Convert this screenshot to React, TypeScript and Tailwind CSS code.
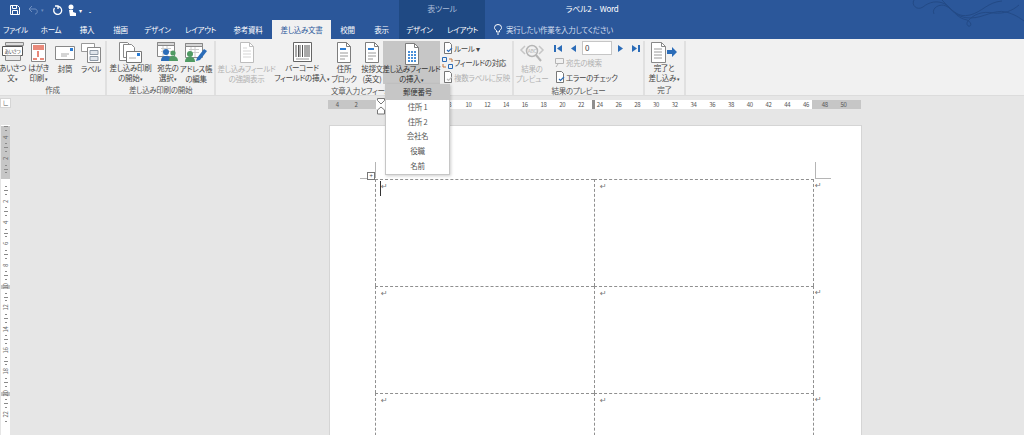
import React from "react";

const font = { fontFamily: '"Noto Sans CJK JP", "Liberation Sans", sans-serif' };

const tabs = [
  { label: "ファイル", w: "w-[31px]" },
  { label: "ホーム", w: "w-[40px]" },
  { label: "挿入", w: "w-[32px]" },
  { label: "描画", w: "w-[35px]" },
  { label: "デザイン", w: "w-[39px]" },
  { label: "レイアウト", w: "w-[47px]" },
  { label: "参考資料", w: "w-[48px]" },
];

function Doc({ lines = "#9aa7b5", stroke = "#8a8a8a" }: { lines?: string; stroke?: string }) {
  return (
    <svg width="18" height="21" viewBox="0 0 18 21" fill="none">
      <path d="M2.5.5h9l4 4v16h-13z" fill="#fff" stroke={stroke} />
      <path d="M11.5.5v4h4" stroke={stroke} />
      <path d="M5 6h4M5 9h8M5 12h8M5 15h8" stroke={lines} />
    </svg>
  );
}

function Address() {
  return (
    <svg width="18" height="21" viewBox="0 0 18 21" fill="none">
      <path d="M2.5.5h9l4 4v16h-13z" fill="#fff" stroke="#7d7d7d" />
      <path d="M11.5.5v4h4" stroke="#7d7d7d" />
      <path d="M5 7h6" stroke="#2b7cd3" strokeWidth="2" />
      <path d="M5 11h8M5 14h8M5 17h5" stroke="#9a9a9a" />
    </svg>
  );
}

function MergeField() {
  return (
    <svg width="18" height="22" viewBox="0 0 18 22" fill="none">
      <path d="M2.5.5h9l4 4v17h-13z" fill="#fff" stroke="#7d7d7d" />
      <path d="M11.5.5v4h4" stroke="#7d7d7d" />
      <path d="M5 8h2v2H5zM8 8h2v2H8zM11 8h2v2h-2zM5 11h2v2H5zM8 11h2v2H8zM11 11h2v2h-2zM5 14h2v2H5zM8 14h2v2H8zM11 14h2v2h-2zM5 17h2v2H5zM8 17h2v2H8zM11 17h2v2h-2z" fill="#4a90d9" />
    </svg>
  );
}

function Greeting() {
  return (
    <svg width="22" height="20" viewBox="0 0 22 20" fill="none">
      <path d="M3.5.5h18v3h-18z" fill="#ddd" stroke="#8a8a8a" />
      <path d="M.5 4.5h20v9H.5z" fill="#fff" stroke="#555" />
      <text x="10.5" y="11" fontSize="4.5" fill="#333" textAnchor="middle" style={font}>あいさつ</text>
      <path d="M3.5 13.500v5h15v-5" fill="#e8e8e8" stroke="#8a8a8a" />
    </svg>
  );
}

function Postcard() {
  return (
    <svg width="15" height="19" viewBox="0 0 15 19" fill="none">
      <path d="M.5.5h14v18H.5z" fill="#fff" stroke="#888" />
      <path d="M2 2h11v5H2z" fill="#e9897a" />
      <path d="M7 8v6" stroke="#e9897a" strokeWidth="2" />
      <path d="M2 16h4M9 16h4" stroke="#e9897a" strokeWidth="2" />
    </svg>
  );
}

function Envelope() {
  return (
    <svg width="20" height="14" viewBox="0 0 20 14" fill="none">
      <path d="M.5.5h19v13H.5z" fill="#fff" stroke="#888" />
      <path d="M15 2h3v3h-3z" fill="#2b7cd3" />
      <path d="M6 8h8M6 10h6" stroke="#aaa" />
    </svg>
  );
}

function Labels() {
  return (
    <svg width="20" height="20" viewBox="0 0 20 20" fill="none">
      <path d="M.5.5h13v8H.5z" fill="#fff" stroke="#999" />
      <path d="M6.500 4.500h13v15h-13z" fill="#fff" stroke="#888" />
      <path d="M9 7.500h8v4H9zM9 13.500h8v4H9z" fill="#dfe5ec" stroke="#8d99a6" />
    </svg>
  );
}

function StartMerge() {
  return (
    <svg width="24" height="21" viewBox="0 0 24 21" fill="none">
      <path d="M.5.5h8l3 3v15H.5z" fill="#fff" stroke="#888" />
      <path d="M4.500 2.500h8l3 3v10h-11z" fill="#fff" stroke="#888" />
      <path d="M7.500 9.500h15v11h-15z" fill="#fff" stroke="#777" />
      <path d="M18 11h3v3h-3z" fill="#2b7cd3" />
      <path d="M10 16h7" stroke="#aaa" />
    </svg>
  );
}

function People({ pen }: { pen?: boolean }) {
  return (
    <svg width="22" height="20" viewBox="0 0 22 20" fill="none">
      <path d="M.5.500h17v14H.5z" fill="#fff" stroke="#888" />
      <path d="M.5.500h17v3H.5z" fill="#d5d5d5" stroke="#888" />
      <path d="M4 6.500h10M4 9.500h10M6 4v10M10 4v10" stroke="#ccc" />
      {pen ? (
        <>
          <circle cx="5" cy="11" r="3" fill="#4f9a63" />
          <path d="M0 19c0-4 2-5 5-5s5 1 5 5z" fill="#4f9a63" />
          <path d="M12 15l7-9 3 2-7 9-4 1z" fill="#2b6cb8" />
        </>
      ) : (
        <>
          <circle cx="9" cy="10" r="3" fill="#2b6cb8" />
          <path d="M4 19c0-4 2-5 5-5s5 1 5 5z" fill="#2b6cb8" />
          <circle cx="16" cy="11" r="2.600" fill="#4f9a63" />
          <path d="M12 19c0-4 2-5 4-5s5 1 5 5z" fill="#4f9a63" />
        </>
      )}
    </svg>
  );
}

function Barcode() {
  return (
    <svg width="19" height="20" viewBox="0 0 19 20" fill="none">
      <path d="M.5.5h18v19H.5z" fill="#fff" stroke="#666" />
      <path d="M3 3v12M5.500 3v12M7 3v12M9.500 3v12M12 3v12M14 3v12M16 3v12" stroke="#555" />
      <path d="M3 17h13" stroke="#999" />
    </svg>
  );
}

function ResultPreview() {
  return (
    <svg width="26" height="20" viewBox="0 0 26 20" fill="none">
      <path d="M6 3L2 7l4 4M20 3l4 4-4 4" stroke="#c6c6c6" strokeWidth="1.500" />
      <circle cx="13" cy="8" r="5.500" stroke="#b5b5b5" strokeWidth="1.500" fill="#f1f1f1" />
      <text x="13" y="10" fontSize="5" fill="#b5b5b5" textAnchor="middle" style={font}>ABC</text>
      <path d="M17 12l5 6" stroke="#b5b5b5" strokeWidth="2" />
    </svg>
  );
}

function Finish() {
  return (
    <svg width="26" height="21" viewBox="0 0 26 21" fill="none">
      <path d="M.5.5h10l4 4v16H.5z" fill="#fff" stroke="#888" />
      <path d="M10.500.5v4h4" stroke="#888" />
      <path d="M3 7h8M3 10h8M3 13h8M3 16h8" stroke="#9a9a9a" />
      <path d="M16 8h5V5l5 5-5 5v-3h-5z" fill="#2b6cb8" />
    </svg>
  );
}

function RibbonButton({
  icon,
  lines,
  w,
  muted,
  caret,
}: {
  icon: React.ReactNode;
  lines: string[];
  w: string;
  muted?: boolean;
  caret?: boolean;
}) {
  return (
    <div className={`${w} h-[43px] flex flex-col items-center shrink-0`}>
      <div className="h-[23px] flex items-center justify-center">{icon}</div>
      <div className={`text-[7.5px] leading-[10px] text-center whitespace-nowrap ${muted ? "text-[#b1b1b1]" : "text-[#444]"}`}>
        {lines.map((l, i) => (
          <div key={i}>
            {l}
            {caret && i === lines.length - 1 ? <span className="text-[5px]"> ▾</span> : null}
          </div>
        ))}
      </div>
    </div>
  );
}

function Group({ w, label, children }: { w: string; label: string; children: React.ReactNode }) {
  return (
    <div className={`${w} shrink-0 h-[54px] flex flex-col border-r-2 border-[#e0e0e0] overflow-visible`}>
      <div className="h-[44px] flex">{children}</div>
      <div className="text-[7.5px] leading-[12px] text-[#555] text-center whitespace-nowrap">{label}</div>
    </div>
  );
}

function SmallRow({ icon, text, muted }: { icon: React.ReactNode; text: string; muted?: boolean }) {
  return (
    <div className={`h-[14.5px] flex items-center gap-[1px] text-[7.5px] whitespace-nowrap ${muted ? "text-[#b1b1b1]" : "text-[#444]"}`}>
      <span className="w-[11px] flex justify-center">{icon}</span>
      {text}
    </div>
  );
}

function MiniDoc({ color = "#2b6cb8" }: { color?: string }) {
  return (
    <svg width="10" height="12" viewBox="0 0 10 12" fill="none">
      <path d="M1.500.500h5l2 2v9h-7z" fill="#fff" stroke="#777" />
      <path d="M4 8l1.500 1.500L9 6" stroke={color} strokeWidth="1.200" />
    </svg>
  );
}

function NavTri({ dir, bar }: { dir: "l" | "r"; bar?: boolean }) {
  return (
    <svg width="9" height="9" viewBox="0 0 9 9" fill="#2b6cb8">
      {dir === "l" ? <path d="M8 1v7L3 4.500z" /> : <path d="M1 1v7l5-3.500z" />}
      {bar ? dir === "l" ? <path d="M0 1h2v7H0z" /> : <path d="M7 1h2v7H7z" /> : null}
    </svg>
  );
}

function RulerH() {
  const left = ["4", "2", "", "2", "4", "6", "8"];
  const rest = ["10", "12", "14", "16", "18", "20", "22", "24", "26", "28", "30", "32", "34", "36", "38", "40", "42", "44", "46", "48", "50"];
  return (
    <div className="w-[533px] h-[9px] flex bg-white relative overflow-visible text-[6px] leading-[9px] text-[#555]">
      <div className="absolute left-0 top-0 h-[9px] w-[48px] bg-[#c6c6c6]" />
      <div className="absolute left-[484px] top-0 h-[9px] w-[49px] bg-[#c6c6c6]" />
      <div className="absolute left-[264px] top-0 h-[9px] w-[3px] bg-[#8f8f8f]" />
      {[...left, ...rest].map((n, i) => (
        <div key={i} className="w-[18.75px] shrink-0 text-center relative">{n}</div>
      ))}
    </div>
  );
}

function RulerV() {
  const nums = ["4", "2", "", "2", "4", "6", "8", "10", "12", "14", "16", "18", "20", "22"];
  return (
    <div className="w-[9px] h-full flex flex-col bg-white shrink-0 pt-[1px]">
      {nums.map((n, i) => (
        <div
          key={i}
          className={`h-[21.33px] shrink-0 relative flex flex-col items-center justify-between ${i < 2 ? "bg-[#c6c6c6]" : i === 2 ? "bg-[linear-gradient(#c6c6c6_50%,#fff_50%)]" : ""}`}
        >
          {n === "10" || n === "20" ? <div className="absolute left-0 right-0 top-[10px] h-[4px] bg-[#c6c6c6]" /> : null}
          <span className="w-[4px] h-px bg-[#8a8a8a]" />
          <span className="w-[2px] h-px bg-[#8a8a8a]" />
          <span className="h-[7px] w-[7px] flex items-center justify-center text-[6px] leading-none text-[#666] -rotate-90 whitespace-nowrap relative">{n}</span>
          <span className="w-[2px] h-px bg-[#8a8a8a]" />
          <span className="h-0" />
        </div>
      ))}
    </div>
  );
}

function Mark() {
  return <span className="text-[#777]" style={{ fontFamily: '"DejaVu Sans", sans-serif' }}>↵</span>;
}

function TableRow({ first }: { first?: boolean }) {
  return (
    <div className="flex h-[107px] shrink-0 text-[8px] leading-[8px]">
      <div className="w-[219px] h-full border-l border-t border-dashed border-[#8f8f8f] pl-[5px] pt-[2px] relative">
        {first ? <span className="absolute left-[4px] top-[1px] w-px h-[15px] bg-[#333]" /> : null}
        <Mark />
      </div>
      <div className="w-[220px] h-full border-l border-r border-t border-dashed border-[#8f8f8f] pl-[5px] pt-[2px]">
        <Mark />
      </div>
      <div className="pl-[1px] pt-[2px]">
        <Mark />
      </div>
    </div>
  );
}

export default function App() {
  return (
    <div className={`w-[1024px] h-[435px] overflow-hidden flex flex-col bg-[#e6e6e6] relative tracking-[-0.3px] [font-feature-settings:"palt"]`} style={font}>
      {/* title bar */}
      <div className="h-[39px] bg-[#2b579a] shrink-0 relative">
        <svg className="absolute right-0 top-0" width="114" height="27" viewBox="0 0 114 27" fill="none" stroke="#234a86" strokeWidth="1">
          <path d="M4 0c-3 5 3 11 9 7 6-5 14-7 22-3 8 5 11 14 22 16 3 1 5 5 3 6-3 1-4-3-2-5 6-7 14-10 26-8 10 1 18-2 25-8" />
          <path d="M24 14c-3-6 6-11 12-8 8 4 11 12 24 9 12-3 18-13 32-14" />
          <path d="M32 0c8 8 14 18 28 18 14 0 24-9 36-6 8 2 14 6 18 9" />
        </svg>
        <div className="h-[20px] flex relative">
          <div className="w-[399px] flex items-center">
            <svg className="ml-[10px]" width="10" height="10" viewBox="0 0 10 10" fill="none" stroke="#fff">
              <path d="M.5.500h7l2 2v7h-9z" />
              <path d="M2.500.500v3h4v-3M2.500 9.500v-4h5v4" />
            </svg>
            <svg className="ml-[8px]" width="12" height="10" viewBox="0 0 12 10" fill="none" stroke="#6f8fc0">
              <path d="M4 1L1 4l3 3M1 4h6c3 0 3 5 0 5" />
            </svg>
            <span className="text-[5px] text-[#6f8fc0] ml-[1px]">▾</span>
            <svg className="ml-[8px]" width="11" height="11" viewBox="0 0 11 11" fill="none" stroke="#fff" strokeWidth="1.300">
              <path d="M6.500 1.500a4 4 0 1 1-4 1.500M6 4V1h-3" />
            </svg>
            <svg className="ml-[5px]" width="8" height="13" viewBox="0 0 8 13" fill="#fff">
              <circle cx="3" cy="3" r="2.500" />
              <path d="M1 6h4v2l3 1v3H2z" />
            </svg>
            <span className="text-[6px] text-white ml-[3px]">▾</span>
            <span className="text-[6px] text-white ml-[8px]">₌</span>
          </div>
          <div className="w-[86px] bg-[#1f4983] text-[8px] leading-[18px] text-[#a9bcd8] text-center">表ツール</div>
          <div className="w-[214px] text-[8px] leading-[18px] text-white text-center whitespace-pre">ラベル2  -  Word</div>
        </div>
        <div className="h-[19px] flex text-[7.5px] leading-[19px] text-white relative">
          {tabs.map((t, i) => (
            <div key={i} className={`${t.w} text-center shrink-0`}>{t.label}</div>
          ))}
          <div className="w-[59px] bg-[#f1f1f1] text-[#2b579a] text-center shrink-0">差し込み文書</div>
          <div className="w-[33px] text-center shrink-0">校閲</div>
          <div className="w-[35px] text-center shrink-0">表示</div>
          <div className="w-[41px] bg-[#1f4983] text-center shrink-0">デザイン</div>
          <div className="w-[45px] bg-[#1f4983] text-center shrink-0">レイアウト</div>
          <div className="ml-[9px] flex items-center gap-[4px] text-[#d3deee]">
            <svg width="8" height="11" viewBox="0 0 8 11" fill="none" stroke="#fff">
              <path d="M2.500 8V6.500C1 5.500.5 4.700.5 3.500a3.500 3 0 0 1 7 0c0 1.200-.5 2-2 3V8zM3 10h2" />
            </svg>
            実行したい作業を入力してください
          </div>
        </div>
      </div>

      {/* ribbon */}
      <div className="h-[57px] shrink-0 bg-[#f1f1f1] border-b border-[#dcdcdc] flex pt-[2px]">
        <Group w="w-[107px]" label="作成">
          <RibbonButton w="w-[25px]" icon={<Greeting />} lines={["あいさつ", "文"]} caret />
          <RibbonButton w="w-[27px]" icon={<Postcard />} lines={["はがき", "印刷"]} caret />
          <RibbonButton w="w-[26px]" icon={<Envelope />} lines={["封筒"]} />
          <RibbonButton w="w-[26px]" icon={<Labels />} lines={["ラベル"]} />
        </Group>
        <Group w="w-[109px]" label="差し込み印刷の開始">
          <RibbonButton w="w-[47px]" icon={<StartMerge />} lines={["差し込み印刷", "の開始"]} caret />
          <RibbonButton w="w-[28px]" icon={<People />} lines={["宛先の", "選択"]} caret />
          <RibbonButton w="w-[28px]" icon={<People pen />} lines={["アドレス帳", "の編集"]} />
        </Group>
        <Group w="w-[298px]" label="文章入力とフィールド">
          <RibbonButton w="w-[61px]" muted icon={<Doc stroke="#bdbdbd" lines="#d5d5d5" />} lines={["差し込みフィールド", "の強調表示"]} />
          <RibbonButton w="w-[50px]" icon={<Barcode />} lines={["バーコード", "フィールドの挿入"]} caret />
          <RibbonButton w="w-[34px]" icon={<Address />} lines={["住所", "ブロック"]} />
          <RibbonButton w="w-[22px]" icon={<Address />} lines={["挨拶文", "(英文)"]} />
          <div className="w-[57px] h-[43px] bg-[#c6c6c6] shrink-0 flex flex-col items-center">
            <div className="h-[23px] pt-[2px] flex items-center"><MergeField /></div>
            <div className="text-[7.5px] leading-[10px] text-[#333] text-center whitespace-nowrap">
              <div>差し込みフィールド</div>
              <div>の挿入<span className="text-[5px]"> ▾</span></div>
            </div>
          </div>
          <div className="pl-[2px] flex flex-col">
            <SmallRow icon={<MiniDoc />} text="ルール ▾" />
            <SmallRow
              icon={
                <svg width="11" height="12" viewBox="0 0 11 12" fill="none">
                  <path d="M.5.500h4v4h-4zM6.500 7.500h4v4h-4z" stroke="#2b6cb8" />
                  <path d="M7 2h3v3M4 10H1V7" stroke="#c0743c" />
                </svg>
              }
              text="フィールドの対応"
            />
            <SmallRow muted icon={<MiniDoc color="#bdbdbd" />} text="複数ラベルに反映" />
          </div>
        </Group>
        <Group w="w-[131px]" label="結果のプレビュー">
          <RibbonButton w="w-[36px]" muted icon={<ResultPreview />} lines={["結果の", "プレビュー"]} />
          <div className="flex flex-col pl-[4px]">
            <div className="h-[14.5px] flex items-center gap-[5px]">
              <NavTri dir="l" bar />
              <NavTri dir="l" />
              <div className="w-[30px] h-[14px] border border-[#c6c6c6] bg-white text-[8px] leading-[12px] text-[#444] pl-[2px]">0</div>
              <NavTri dir="r" />
              <NavTri dir="r" bar />
            </div>
            <SmallRow
              muted
              icon={
                <svg width="11" height="11" viewBox="0 0 11 11" fill="none" stroke="#b5b5b5">
                  <path d="M1.500 1.500h8v5h-8zM4 7l-2 3" />
                </svg>
              }
              text="宛先の検索"
            />
            <SmallRow icon={<MiniDoc />} text="エラーのチェック" />
          </div>
        </Group>
        <Group w="w-[41px]" label="完了">
          <RibbonButton w="w-[38px]" icon={<Finish />} lines={["完了と", "差し込み"]} caret />
        </Group>
      </div>

      {/* document area */}
      <div className="flex-1 min-h-0 flex flex-col overflow-hidden">
        <div className="flex items-end h-[12px] shrink-0">
          <div className="w-[11px] h-[10px] bg-white border border-[#d5d5d5] text-[6px] leading-[8px] text-center text-[#555] shrink-0">∟</div>
          <div className="ml-[317px] mb-[-1px]">
            <RulerH />
          </div>
        </div>
        <div className="flex mt-[17px] flex-1 min-h-0">
          <div className="ml-[1px] shrink-0">
            <RulerV />
          </div>
          <div className="ml-[319px] w-[533px] bg-white border-l border-t border-r border-[#d5d5d5] pl-[45px] pt-[53px] relative">
            <div className="absolute left-[45px] top-[36px] w-px h-[16px] bg-[#b5b5b5]" />
            <div className="absolute left-[30px] top-[52px] w-[15px] h-px bg-[#b5b5b5]" />
            <div className="absolute left-[485px] top-[36px] w-px h-[16px] bg-[#b5b5b5]" />
            <div className="absolute left-[485px] top-[52px] w-[16px] h-px bg-[#b5b5b5]" />
            <div className="absolute left-[37px] top-[46px] w-[8px] h-[8px] bg-white border border-[#777] flex items-center justify-center text-[6px] leading-none text-[#444]">+</div>
            <TableRow first />
            <TableRow />
            <TableRow />
          </div>
        </div>
      </div>

      {/* ruler indent markers */}
      <svg className="absolute left-[376px] top-[98px]" width="10" height="18" viewBox="0 0 10 18" fill="#fff" stroke="#777">
        <path d="M1.500.500h7v2L5 6 1.500 2.500z" />
        <path d="M5 9l3.500 3v4h-7v-4z" />
      </svg>

      {/* insert merge field menu */}
      <div className="absolute left-[385px] top-[84px] w-[65px] bg-white border border-[#c6c6c6] shadow-[1px_1px_3px_rgba(0,0,0,0.2)] flex flex-col text-[7.5px] text-[#555] text-center">
        <div className="h-[14.8px] leading-[14px] bg-[#c6c6c6] text-[#333]">郵便番号</div>
        <div className="h-[14.8px] leading-[14.8px]">住所 1</div>
        <div className="h-[14.8px] leading-[14.8px]">住所 2</div>
        <div className="h-[14.8px] leading-[14.8px]">会社名</div>
        <div className="h-[14.8px] leading-[14.8px]">役職</div>
        <div className="h-[14.8px] leading-[14.8px]">名前</div>
      </div>
    </div>
  );
}
